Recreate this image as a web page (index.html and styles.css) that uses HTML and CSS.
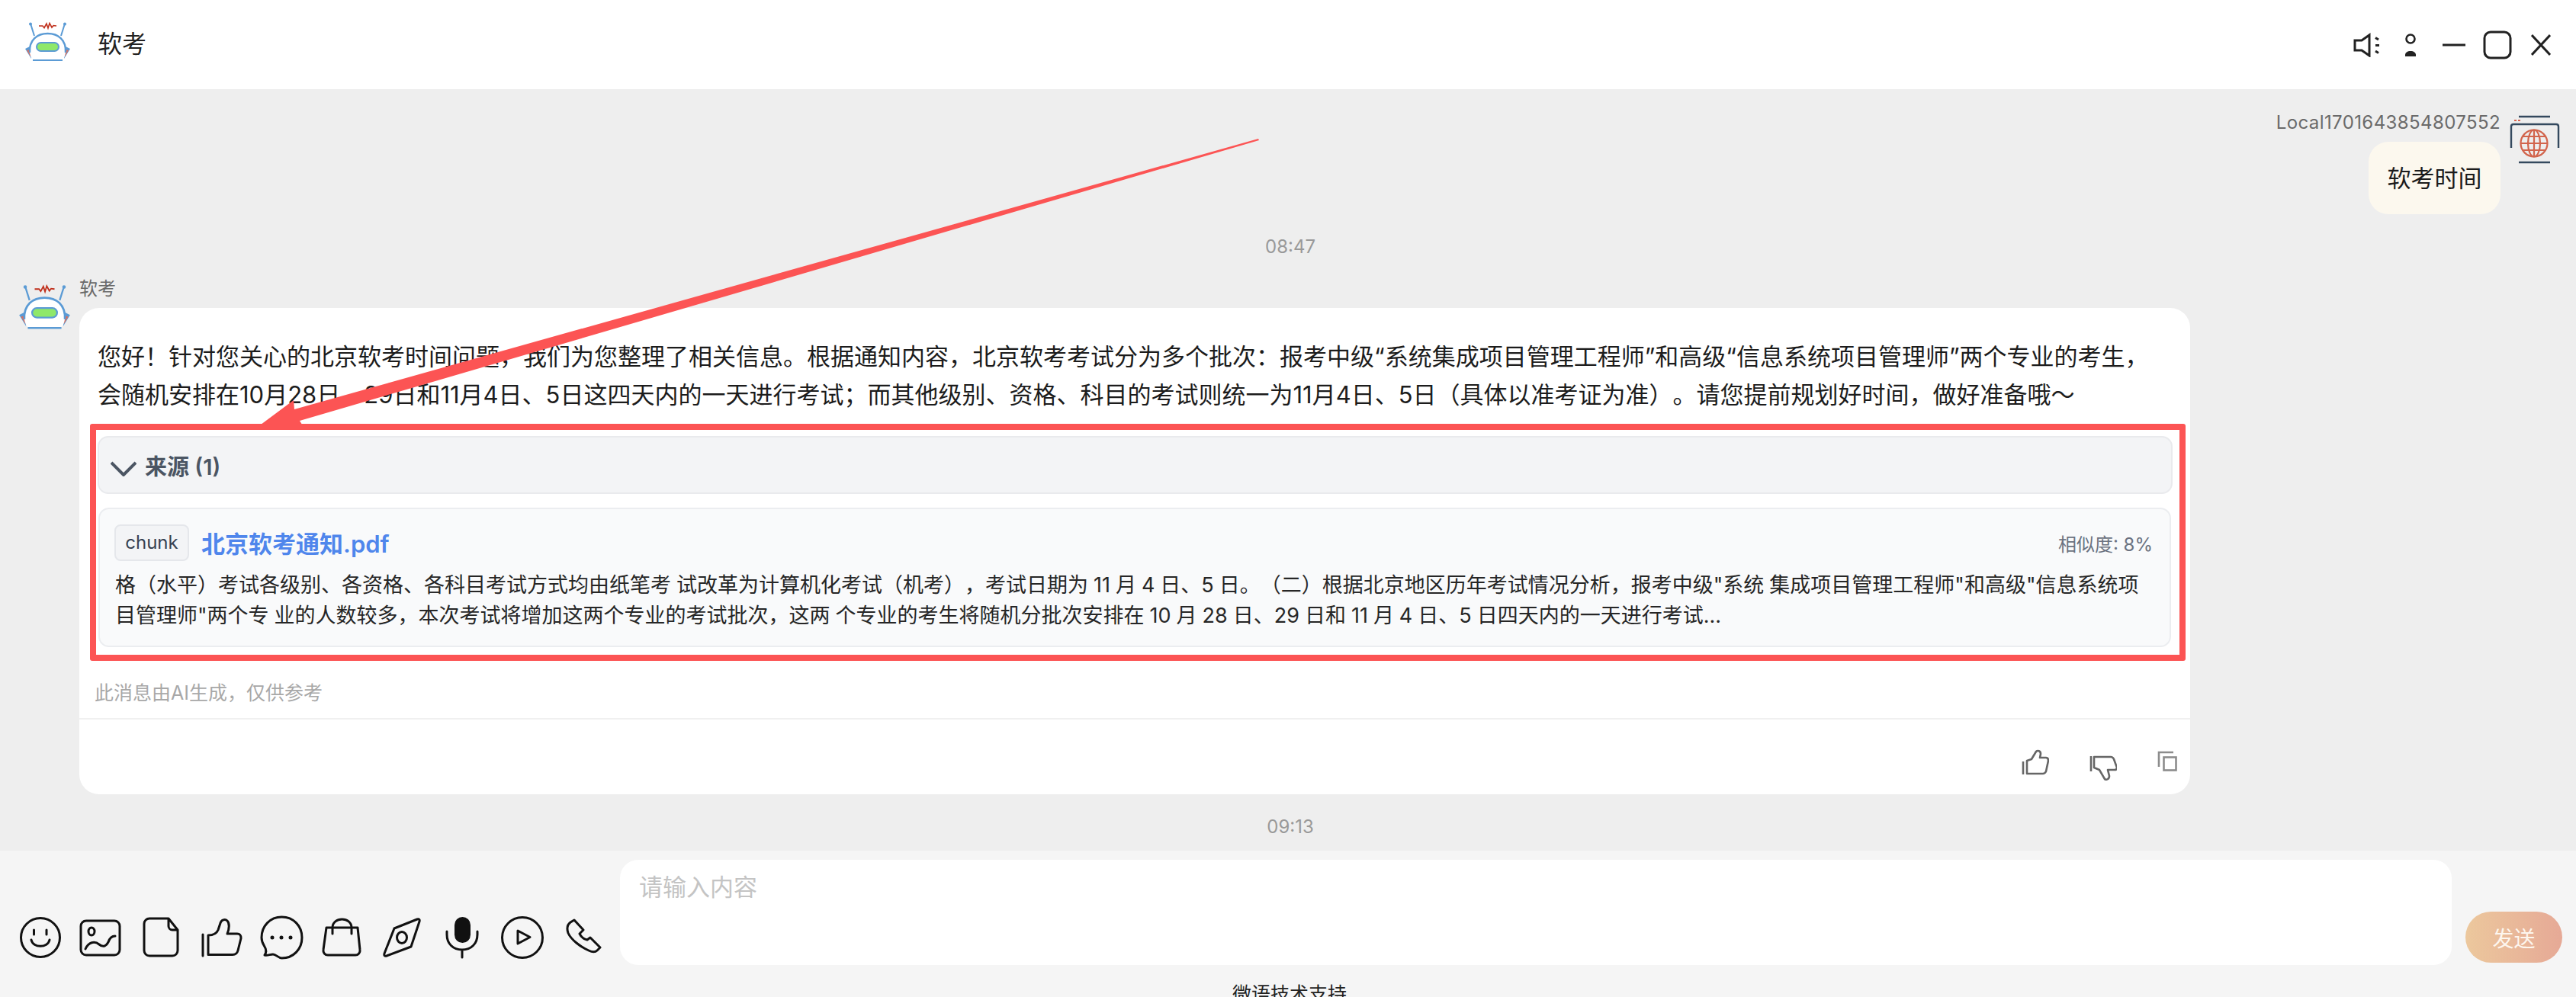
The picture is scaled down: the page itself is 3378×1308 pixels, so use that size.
FILE: index.html
```html
<!DOCTYPE html>
<html lang="zh-CN">
<head>
<meta charset="utf-8">
<title>软考</title>
<link rel="stylesheet" href="styles.css">
</head>
<body>
<svg class="defs" width="0" height="0" aria-hidden="true">
  <symbol id="robot" viewBox="0 0 61 52">
    <path d="M8 2 L13 18 M53 2 L48 18" fill="none" stroke="#5b9bd5" stroke-width="2"/>
    <circle cx="8" cy="2.5" r="2" fill="#5b9bd5"/>
    <circle cx="53" cy="2.5" r="2" fill="#5b9bd5"/>
    <polyline points="19,5 24,5 26,7.5 29,2 31,8 33,1.5 36,7 38,4.5 42,5" fill="none" stroke="#c0301c" stroke-width="1.6"/>
    <path d="M1 35 L7 32 L9 48 Z M60 35 L54 32 L52 48 Z" fill="#5b9bd5"/>
    <path d="M3 37 L7 36 L8.5 46 Z M58 37 L54 36 L52.5 46 Z" fill="#d9705f"/>
    <path d="M7 40 C6 23 17 15 30.5 15 C44 15 55 23 54 40 C53 45 52 47 50 49 H11 C9 47 8 45 7 40 Z" fill="#fff"/>
    <path d="M7 40 C6 23 17 15 30.5 15 C44 15 55 23 54 40" fill="none" stroke="#5b9bd5" stroke-width="2.4"/>
    <path d="M11 50 H50" stroke="#5b9bd5" stroke-width="2.2"/>
    <rect x="16" y="27" width="29" height="11" rx="5.5" fill="#8fe86a" stroke="#5b9bd5" stroke-width="2"/>
  </symbol>
</svg>

<header class="topbar">
  <svg class="logo"><use href="#robot"/></svg>
  <div class="topbar-title">软考</div>
  <div class="topbar-actions">
    <span class="top-cell"><svg class="icon-top" width="36" height="32" viewBox="0 0 36 32"><path d="M2 10 H11 L21 3 V30 L11 23 H2 Z M29 6.5 L33 9 M29 16.5 H34 M29 24 L33 26.5"/></svg></span>
    <span class="top-cell"><svg class="icon-top person" width="18" height="32" viewBox="0 0 18 32"><circle cx="9" cy="8" r="5.5"/><path class="solid" d="M2 31 V29 C2 26 5 24 9 24 C13 24 16 26 16 29 V31 Z"/></svg></span>
    <span class="top-cell"><svg class="icon-top" width="30" height="6" viewBox="0 0 30 6"><path d="M0 3 H30"/></svg></span>
    <span class="top-cell"><svg class="icon-top" width="38" height="38" viewBox="0 0 38 38"><rect x="2" y="2" width="34" height="34" rx="8"/></svg></span>
    <span class="top-cell"><svg class="icon-top" width="26" height="28" viewBox="0 0 26 28"><path d="M1 1 L25 27 M25 1 L1 27"/></svg></span>
  </div>
</header>

<main class="chat">
  <section class="msg-user">
    <div class="msg-user-body">
      <div class="msg-name msg-name-user">Local1701643854807552</div>
      <div class="msg-user-bubble">软考时间</div>
    </div>
    <svg class="user-avatar" width="68" height="66" viewBox="0 0 68 66">
      <path d="M13 3 H54 M3 44 V16 Q3 13 6 13 H62 Q65 13 65 16 V44 M13 63 H54" fill="none" stroke="#34495e" stroke-width="2.4"/>
      <path d="M7 8 H10 M12 8 H15" stroke="#d9634b" stroke-width="2"/>
      <g fill="none" stroke="#d2644c" stroke-width="2.2">
        <circle cx="33" cy="38" r="17.5"/>
        <ellipse cx="33" cy="38" rx="8" ry="17.5"/>
        <path d="M33 20.5 V55.5 M15.5 38 H50.5 M18 29 H48 M18 47 H48"/>
      </g>
    </svg>
  </section>

  <div class="time">08:47</div>

  <section class="msg-bot">
    <svg class="bot-avatar"><use href="#robot"/></svg>
    <div class="msg-bot-body">
      <div class="msg-name">软考</div>
      <article class="bubble">
        <p class="answer">您好！针对您关心的北京软考时间问题，我们为您整理了相关信息。根据通知内容，北京软考考试分为多个批次：报考中级“系统集成项目管理工程师”和高级“信息系统项目管理师”两个专业的考生，<br>会随机安排在10月28日、29日和11月4日、5日这四天内的一天进行考试；而其他级别、资格、科目的考试则统一为11月4日、5日（具体以准考证为准）。请您提前规划好时间，做好准备哦～</p>

        <div class="annotated">
          <div class="sources-head">
            <svg class="chevron" width="34" height="20" viewBox="0 0 34 20"><path d="M1 2 L17 18 L33 2"/></svg>
            <span>来源 (1)</span>
          </div>
          <div class="source-card">
            <div class="source-top">
              <span class="chunk">chunk</span>
              <span class="source-title">北京软考通知.pdf</span>
              <span class="score">相似度: 8%</span>
            </div>
            <p class="source-text">格（水平）考试各级别、各资格、各科目考试方式均由纸笔考 试改革为计算机化考试（机考），考试日期为 11 月 4 日、5 日。（二）根据北京地区历年考试情况分析，报考中级"系统 集成项目管理工程师"和高级"信息系统项<br>目管理师"两个专 业的人数较多，本次考试将增加这两个专业的考试批次，这两 个专业的考生将随机分批次安排在 10 月 28 日、29 日和 11 月 4 日、5 日四天内的一天进行考试...</p>
          </div>
        </div>

        <div class="disclaimer">此消息由AI生成，仅供参考</div>

        <div class="actions">
          <svg class="icon-act" width="36" height="44" viewBox="0 0 36 44"><path d="M2 19 V36 M7 18 L13 16 L19 6 C21 4 25 5 25 9 L24 14 H32 C34 14 35 16 35 18 L32 32 C31 34 30 35 28 35 H7 Z"/></svg>
          <svg class="icon-act" width="36" height="44" viewBox="0 0 36 44"><path d="M2 12 V32 M6 13 H28 C30 13 31 14 32 16 L36 27 C36 29 35 30 33 30 H24 L26 38 C26 42 22 44 20 42 L13 30 L6 27 Z"/></svg>
          <svg class="icon-act copy" width="36" height="44" viewBox="0 0 36 44"><path d="M6 26 V7 H25"/><rect x="12.5" y="13.5" width="16" height="17"/></svg>
        </div>
      </article>
    </div>
  </section>

  <div class="time">09:13</div>
</main>

<footer class="composer">
  <div class="composer-row">
    <div class="tools">
      <svg class="tool" viewBox="0 0 60 60"><circle cx="30" cy="30" r="25.5"/><path d="M21.5 20 V26 M38 20 V26 M18 33 C20 44 40 44 42 33"/></svg>
      <svg class="tool" viewBox="0 0 60 60"><rect x="4" y="8" width="51" height="45" rx="7"/><ellipse cx="18" cy="22" rx="4" ry="5"/><path d="M10 45 C14 36 22 34 28 39 C34 44 38 40 40 36 C42 30 45 28 49 28"/></svg>
      <svg class="tool" viewBox="0 0 60 60"><path d="M15 5 H40 L52 20 V47 A7 7 0 0 1 45 54 H15 A7 7 0 0 1 8 47 V12 A7 7 0 0 1 15 5 Z M40 5 V15 A5 5 0 0 0 45 20 H52"/></svg>
      <svg class="tool" viewBox="0 0 60 60"><path d="M6 26 V54 M13 27 C20 27 24 25 26 20 L29 11 C30 7 35 5 38 8 C41 11 41 18 38 25 H51 C55 25 56 27 56 31 L52 47 C51 51 48 52.5 45 52.5 H13 Z"/></svg>
      <svg class="tool" viewBox="0 0 60 60"><path d="M7.5 41 C5 37 4 34 4 30 C4 15 15 3 30.5 3 C46 3 57 15 57 30 C57 45 46 57 30.5 57 C26 57 23 52 19 52 C15 52 12 54 8 53 C11 49 10 45 7.5 41 Z"/><path class="dots" d="M18 30 H18.01 M30 30 H30.01 M42 30 H42.01"/></svg>
      <svg class="tool" viewBox="0 0 60 60"><path d="M10 17 H51 L54 46 A6 6 0 0 1 48 53 H12 A6 6 0 0 1 6 46 Z M18 25 V17 C18 10 24 6 30.5 6 C37 6 43 10 43 17 V25"/></svg>
      <svg class="tool" viewBox="0 0 60 60"><path d="M20 18 L50 6 Q54 5 53 9 L42 42 L10 54 Q6 55 7 51 Z"/><ellipse cx="30" cy="30" rx="6.5" ry="7.5"/></svg>
      <svg class="tool" viewBox="0 0 60 60"><rect class="solid" x="20" y="3" width="21" height="34" rx="10.5"/><path d="M10 22 V26 C10 38 18 46 30 46 C42 46 50 38 50 26 V22 M30 46 V56"/></svg>
      <svg class="tool" viewBox="0 0 60 60"><circle cx="30" cy="30" r="26.5"/><path d="M24 21 L40 29.5 L24 38 Z"/></svg>
      <svg class="tool" viewBox="0 0 60 60"><path d="M11 24 C9 18 10 13 14 10 L19 7 L31 20 L26 25 C28 29 31 32 36 33 L40 30 L53 43 L49 47 C46 50 42 49 38 47 C27 42 15 33 11 24 Z"/></svg>
    </div>
    <div class="input">请输入内容</div>
    <button class="send" type="button">发送</button>
  </div>
  <div class="powered">微语技术支持</div>
</footer>

<svg class="arrow" width="3378" height="1308" viewBox="0 0 3378 1308" aria-hidden="true">
  <polygon points="1650,182 1651,184 393,552 398,560 338,560 385,525 386,537"/>
</svg>
</body>
</html>
```

FILE: styles.css
```css
* { box-sizing: border-box; }

html, body {
  margin: 0;
  padding: 0;
  width: 3378px;
  height: 1308px;
  overflow: hidden;
}

body {
  position: relative;
  display: flex;
  flex-direction: column;
  background: #eeeeee;
  color: #1c1c1c;
  font-family: Inter, "Noto Sans CJK SC", sans-serif;
  text-spacing-trim: space-all;
}

.defs { position: absolute; }

p { margin: 0; }

/* top bar */
.topbar {
  flex: none;
  height: 117px;
  display: flex;
  align-items: center;
  padding: 0 18px 0 32px;
  background: #ffffff;
}

.logo {
  width: 61px;
  height: 52px;
  margin: 0 35px 7px 0;
}

.topbar-title {
  margin-bottom: 7px;
  font-size: 32px;
  color: #222;
}

.topbar-actions {
  margin-left: auto;
  display: flex;
  align-items: center;
}

.top-cell {
  width: 57px;
  height: 40px;
  display: flex;
  align-items: center;
  justify-content: center;
}

.icon-top {
  fill: none;
  stroke: #222;
  stroke-width: 3;
}

.icon-top.person { stroke-width: 2.6; }
.icon-top .solid { fill: #222; stroke: none; }

/* chat */
.chat {
  flex: none;
  height: 999px;
  padding: 30px 20px 0 24px;
}

.msg-user {
  display: flex;
  justify-content: flex-end;
  gap: 11px;
}

.user-avatar { margin-top: 3px; flex: none; }

.msg-user-body {
  display: flex;
  flex-direction: column;
  align-items: flex-end;
}

.msg-name {
  font-size: 24px;
  line-height: 28px;
  color: #6a6a6a;
}

.msg-name-user { letter-spacing: 0.4px; }

.msg-user-bubble {
  margin-top: 11px;
  width: 173px;
  height: 95px;
  line-height: 95px;
  text-align: center;
  font-size: 31px;
  color: #1c1c1c;
  background: #fcf8ee;
  border-radius: 26px;
}

.time {
  margin-top: 27px;
  padding: 1px 0 0 2px;
  font-size: 24px;
  line-height: 30px;
  text-align: center;
  color: #999;
}

.msg-bot {
  display: flex;
  gap: 11px;
  margin-top: 26px;
}

.bot-avatar {
  flex: none;
  width: 69px;
  height: 60px;
  margin-top: 8px;
}

.msg-bot-body { width: 2768px; }

.bubble {
  margin-top: 11px;
  height: 638px;
  background: #ffffff;
  border-radius: 26px;
}

.answer {
  padding: 39px 0 0 24px;
  font-size: 31px;
  line-height: 50px;
  color: #1c1c1c;
  white-space: nowrap;
}

/* annotation box drawn around the sources */
.annotated {
  width: 2748px;
  height: 311px;
  margin: 13px 0 0 14px;
  padding: 8px 9px 0 2px;
  border: 8px solid #fc5454;
  border-radius: 3px;
}

.sources-head {
  height: 76px;
  display: flex;
  align-items: center;
  gap: 11px;
  padding-left: 15px;
  font-size: 29px;
  font-weight: 600;
  color: #4b5563;
  background: #f3f4f6;
  border: 2px solid #e9eaed;
  border-radius: 14px;
}

.chevron {
  margin-top: 9px;
  fill: none;
  stroke: #4b5563;
  stroke-width: 4;
}

.source-card {
  margin: 18px 2px 0 1px;
  padding: 20px 22px 19px 19px;
  background: #f9fafb;
  border: 2px solid #ebedf0;
  border-radius: 14px;
}

.source-top {
  display: flex;
  align-items: center;
  gap: 16px;
}

.chunk {
  width: 98px;
  height: 48px;
  line-height: 44px;
  text-align: center;
  font-size: 24px;
  color: #374151;
  background: #f3f4f6;
  border: 2px solid #e5e7eb;
  border-radius: 8px;
}

.source-title {
  margin-bottom: 2px;
  font-size: 31px;
  font-weight: 600;
  color: #4f86ec;
}

.score {
  margin-left: auto;
  font-size: 24px;
  color: #6b7280;
}

.source-text {
  margin-top: 12px;
  padding-left: 1px;
  font-size: 27px;
  line-height: 40px;
  word-spacing: -0.6px;
  color: #262626;
  white-space: nowrap;
}

.disclaimer {
  height: 77px;
  padding: 27px 0 0 20px;
  font-size: 25px;
  line-height: 30px;
  color: #a8a8a8;
  border-bottom: 2px solid #f0f0f0;
}

.actions {
  display: flex;
  justify-content: flex-end;
  gap: 53px;
  padding: 36px 11px 0 0;
}

.icon-act {
  fill: none;
  stroke: #666;
  stroke-width: 2.6;
  stroke-linejoin: round;
}

.icon-act.copy {
  margin-left: -4px;
  stroke: #8c8c8c;
  stroke-linejoin: miter;
}

/* composer */
.composer {
  flex: none;
  height: 192px;
  background: #f5f5f5;
  overflow: hidden;
}

.composer-row {
  height: 173px;
  display: flex;
  align-items: flex-start;
  padding-left: 23px;
}

.tools {
  display: flex;
  gap: 19px;
  margin-top: 84px;
}

.tool {
  width: 60px;
  height: 60px;
  fill: none;
  stroke: #111;
  stroke-width: 3;
  stroke-linejoin: round;
  stroke-linecap: round;
}

.tool .solid { fill: #111; stroke: none; }
.tool .dots { stroke-width: 5; }

.input {
  width: 2402px;
  height: 138px;
  margin: 12px 0 0 19px;
  padding: 16px 25px;
  font-size: 31px;
  line-height: 40px;
  color: #c4c4c4;
  background: #ffffff;
  border-radius: 24px;
}

.send {
  width: 127px;
  height: 67px;
  margin: 80px 0 0 18px;
  padding: 0;
  border: 0;
  border-radius: 34px;
  font: inherit;
  font-size: 28px;
  color: #fdf6ee;
  background: linear-gradient(90deg, #ecc89d, #e6a996);
}

.powered {
  font-size: 25px;
  line-height: 30px;
  text-align: center;
  padding-left: 4px;
  color: #222;
}

/* annotation arrow over the page */
.arrow {
  position: absolute;
  left: 0;
  top: 0;
  pointer-events: none;
}

.arrow polygon { fill: #fc5454; }
```
